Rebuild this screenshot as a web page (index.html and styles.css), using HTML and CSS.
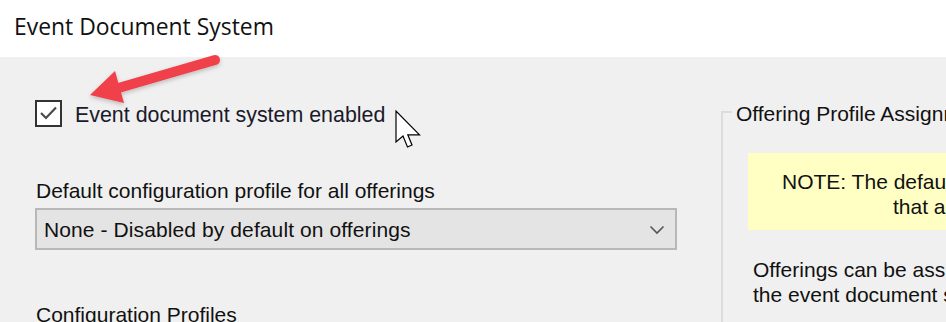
FILE: index.html
```html
<!DOCTYPE html>
<html>
<head>
<meta charset="utf-8">
<link rel="stylesheet" href="styles.css">
</head>
<body>
<div class="page">
  <header class="header"><span class="title">Event Document System</span></header>
  <main class="main">
    <section class="left">
      <label class="check-row">
        <span class="checkbox">
          <svg width="21" height="21" viewBox="0 0 21 21"><path d="M3 10 L8 15 L18 4.5" fill="none" stroke="#4a4a4a" stroke-width="2.2"/></svg>
        </span>
        <span class="check-label">Event document system enabled</span>
      </label>
      <div class="field-label">Default configuration profile for all offerings</div>
      <div class="select">
        <span class="select-text">None - Disabled by default on offerings</span>
        <svg class="chev" width="16" height="10" viewBox="0 0 16 10"><path d="M1.5 1.5 L8 8 L14.5 1.5" fill="none" stroke="#555" stroke-width="1.6"/></svg>
      </div>
      <div class="section-label">Configuration Profiles</div>
    </section>
    <section class="group">
      <div class="group-legend">Offering Profile Assignment</div>
      <div class="note">
        <div class="note-l1">NOTE: The default configuration profile is applied to all offerings</div>
        <div class="note-l2">that are not assigned a specific profile below.</div>
      </div>
      <div class="desc">Offerings can be assigned a specific configuration profile to override<br>the event document system default for that offering.</div>
    </section>
  </main>
  <svg class="arrow" width="140" height="70" viewBox="0 0 140 70">
    <defs>
      <filter id="sh" x="-20%" y="-20%" width="140%" height="160%">
        <feDropShadow dx="0" dy="2" stdDeviation="2" flood-color="#000" flood-opacity="0.22"/>
      </filter>
    </defs>
    <g filter="url(#sh)" fill="#f0404a" stroke="#f0404a">
      <line x1="130" y1="15" x2="30" y2="44" stroke-width="10" stroke-linecap="round"/>
      <polygon points="5,50 30,26 39,58" stroke="none"/>
    </g>
  </svg>
  <svg class="cursor" width="27" height="40" viewBox="0 0 27 40">
    <path d="M1 1 L1 32 L8 26 L12.5 37 L17 35 L12.8 24.8 L24.5 24.8 Z" fill="#fff" stroke="#000" stroke-width="1.2" stroke-linejoin="miter"/>
  </svg>
</div>
</body>
</html>
```

FILE: styles.css
```css
html, body {
  margin: 0;
  padding: 0;
}
body {
  width: 946px;
  height: 322px;
  overflow: hidden;
  font-family: "Liberation Sans", Arial, sans-serif;
  color: #000;
}
.page {
  position: relative;
  width: 946px;
  height: 322px;
  overflow: hidden;
  background: #f0f0f0;
}
.header {
  height: 57px;
  background: #fff;
  box-sizing: border-box;
  padding-left: 14px;
  padding-top: 12px;
}
.title {
  font-family: "Open Sans", "Noto Sans", sans-serif;
  font-size: 22.9px;
  line-height: 30px;
  color: #111;
  display: block;
}
.main {
  display: flex;
  height: 265px;
}
.left {
  width: 686px;
  padding-left: 35px;
  padding-top: 43px;
  flex: none;
}
.check-row {
  display: flex;
  align-items: flex-start;
  gap: 13px;
  height: 27px;
}
.checkbox {
  width: 23px;
  height: 23px;
  border: 2px solid #333;
  background: #fff;
  display: flex;
  align-items: center;
  justify-content: center;
  flex: none;
}
.check-label {
  margin-top: 2px;
  font-size: 21.4px;
  line-height: 27px;
  color: #1a1a2a;
}
.field-label {
  margin-top: 52px;
  margin-left: 1px;
  font-size: 21px;
  line-height: 24px;
  color: #111;
}
.select {
  margin-top: 5px;
  width: 642px;
  height: 42px;
  box-sizing: border-box;
  border: 2px solid #b8b8b8;
  background: #e4e4e4;
  display: flex;
  align-items: center;
  justify-content: space-between;
  padding: 2px 10px 0 7px;
}
.select-text {
  font-size: 21px;
  letter-spacing: 0.1px;
  color: #111;
}
.section-label {
  margin-top: 53px;
  margin-left: 1px;
  font-size: 21px;
  line-height: 24px;
  color: #111;
}
.group {
  flex: none;
  width: 400px;
  margin-top: 54px;
  border-left: 2px solid #dcdcdc;
  border-top: 2px solid #dcdcdc;
  position: relative;
  padding-left: 25px;
}
.group-legend {
  position: absolute;
  top: -11px;
  left: 9px;
  background: #f0f0f0;
  padding: 0 4px;
  font-size: 21px;
  line-height: 24px;
  color: #111;
  white-space: nowrap;
}
.note {
  margin-top: 40px;
  height: 77px;
  background: #ffffc4;
  box-sizing: border-box;
  padding-top: 16px;
  font-size: 21px;
  line-height: 25px;
  color: #111;
}
.note-l1 {
  padding-left: 34px;
  white-space: nowrap;
}
.note-l2 {
  padding-left: 145px;
  white-space: nowrap;
}
.desc {
  margin-top: 27px;
  padding-left: 5px;
  font-size: 21px;
  line-height: 25px;
  white-space: nowrap;
  color: #111;
}
.arrow {
  position: absolute;
  left: 85px;
  top: 45px;
}
.cursor {
  position: absolute;
  left: 395px;
  top: 110px;
}
```
